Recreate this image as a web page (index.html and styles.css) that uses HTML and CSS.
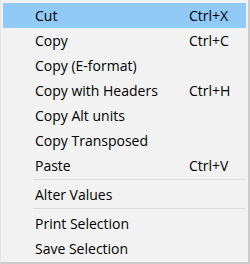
FILE: index.html
```html
<!DOCTYPE html>
<html>
<head>
<meta charset="utf-8">
<link rel="stylesheet" href="styles.css">
</head>
<body>
<div class="menu">
  <div class="item active"><span class="label">Cut</span><span class="key">Ctrl+X</span></div>
  <div class="item"><span class="label">Copy</span><span class="key">Ctrl+C</span></div>
  <div class="item"><span class="label">Copy (E-format)</span><span class="key"></span></div>
  <div class="item"><span class="label">Copy with Headers</span><span class="key">Ctrl+H</span></div>
  <div class="item"><span class="label">Copy Alt units</span><span class="key"></span></div>
  <div class="item"><span class="label">Copy Transposed</span><span class="key"></span></div>
  <div class="item"><span class="label">Paste</span><span class="key">Ctrl+V</span></div>
  <div class="sep"></div>
  <div class="item"><span class="label">Alter Values</span><span class="key"></span></div>
  <div class="sep"></div>
  <div class="item"><span class="label">Print Selection</span><span class="key"></span></div>
  <div class="item"><span class="label">Save Selection</span><span class="key"></span></div>
</div>
</body>
</html>
```

FILE: styles.css
```css
html, body {
  margin: 0;
  padding: 0;
  background: #f2f2f2;
}
.menu {
  box-sizing: border-box;
  width: 250px;
  height: 264px;
  background: #f2f2f2;
  border-left: 1px solid #e3e3e3;
  border-right: 2px solid #cccccc;
  border-bottom: 2px solid #cccccc;
  padding: 3px 2px 0 2px;
  font-family: "Open Sans", "Noto Sans", sans-serif;
  font-size: 14px;
  color: #000;
}
.item {
  display: flex;
  align-items: center;
  height: 25px;
  padding-left: 32px;
}
.item.active {
  background: #91c9f7;
}
.label {
  flex: 1;
}
.key {
  width: 57px;
}
.sep {
  height: 1px;
  background: #d9d9d9;
  margin: 1px 1px 2px 30px;
}
```
